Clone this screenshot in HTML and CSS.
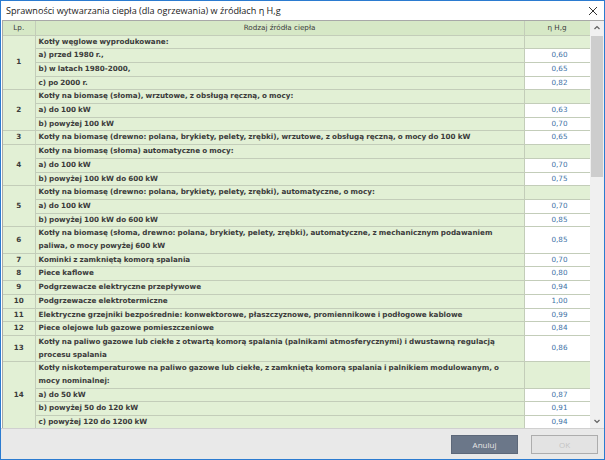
FILE: index.html
```html
<!DOCTYPE html>
<html lang="pl">
<head>
    <meta charset="UTF-8">
    <title>Sprawności wytwarzania ciepła</title>
    <link rel="stylesheet" href="styles.css">
</head>
<body>
    <div class="window">
        <div class="titlebar">
            <span class="title">Sprawności wytwarzania ciepła (dla ogrzewania) w źródłach η H,g</span>
            <svg class="close" width="10" height="10" viewBox="0 0 10 10"><path d="M1 1 L9 9 M9 1 L1 9" stroke="#333" stroke-width="1" fill="none"/></svg>
        </div>

        <div class="content">
            <div class="grid-wrap">
                <table class="grid">
                    <colgroup>
                        <col class="c-lp"><col class="c-desc"><col class="c-val">
                    </colgroup>
                    <thead>
                        <tr><th>Lp.</th><th>Rodzaj źródła ciepła</th><th>η H,g</th></tr>
                    </thead>
                    <tbody>
                        <tr><td class="lp" rowspan="4">1</td><td>Kotły węglowe wyprodukowane:</td><td class="empty"></td></tr>
                        <tr><td>a) przed 1980 r.,</td><td class="val">0,60</td></tr>
                        <tr><td>b) w latach 1980-2000,</td><td class="val">0,65</td></tr>
                        <tr><td>c) po 2000 r.</td><td class="val">0,82</td></tr>

                        <tr><td class="lp" rowspan="3">2</td><td>Kotły na biomasę (słoma), wrzutowe, z obsługą ręczną, o mocy:</td><td class="empty"></td></tr>
                        <tr><td>a) do 100 kW</td><td class="val">0,63</td></tr>
                        <tr><td>b) powyżej 100 kW</td><td class="val">0,70</td></tr>

                        <tr><td class="lp">3</td><td>Kotły na biomasę (drewno: polana, brykiety, pelety, zrębki), wrzutowe, z obsługą ręczną, o mocy do 100 kW</td><td class="val">0,65</td></tr>

                        <tr><td class="lp" rowspan="3">4</td><td>Kotły na biomasę (słoma) automatyczne o mocy:</td><td class="empty"></td></tr>
                        <tr><td>a) do 100 kW</td><td class="val">0,70</td></tr>
                        <tr><td>b) powyżej 100 kW do 600 kW</td><td class="val">0,75</td></tr>

                        <tr><td class="lp" rowspan="3">5</td><td>Kotły na biomasę (drewno: polana, brykiety, pelety, zrębki), automatyczne, o mocy:</td><td class="empty"></td></tr>
                        <tr><td>a) do 100 kW</td><td class="val">0,70</td></tr>
                        <tr><td>b) powyżej 100 kW do 600 kW</td><td class="val">0,85</td></tr>

                        <tr><td class="lp">6</td><td>Kotły na biomasę (słoma, drewno: polana, brykiety, pelety, zrębki), automatyczne, z mechanicznym podawaniem<br>paliwa, o mocy powyżej 600 kW</td><td class="val">0,85</td></tr>
                        <tr><td class="lp">7</td><td>Kominki z zamkniętą komorą spalania</td><td class="val">0,70</td></tr>
                        <tr><td class="lp">8</td><td>Piece kaflowe</td><td class="val">0,80</td></tr>
                        <tr><td class="lp">9</td><td>Podgrzewacze elektryczne przepływowe</td><td class="val">0,94</td></tr>
                        <tr><td class="lp">10</td><td>Podgrzewacze elektrotermiczne</td><td class="val">1,00</td></tr>
                        <tr><td class="lp">11</td><td>Elektryczne grzejniki bezpośrednie: konwektorowe, płaszczyznowe, promiennikowe i podłogowe kablowe</td><td class="val">0,99</td></tr>
                        <tr><td class="lp">12</td><td>Piece olejowe lub gazowe pomieszczeniowe</td><td class="val">0,84</td></tr>
                        <tr><td class="lp">13</td><td>Kotły na paliwo gazowe lub ciekłe z otwartą komorą spalania (palnikami atmosferycznymi) i dwustawną regulacją<br>procesu spalania</td><td class="val">0,86</td></tr>

                        <tr><td class="lp" rowspan="4">14</td><td>Kotły niskotemperaturowe na paliwo gazowe lub ciekłe, z zamkniętą komorą spalania i palnikiem modulowanym, o<br>mocy nominalnej:</td><td class="empty"></td></tr>
                        <tr><td>a) do 50 kW</td><td class="val">0,87</td></tr>
                        <tr><td>b) powyżej 50 do 120 kW</td><td class="val">0,91</td></tr>
                        <tr><td>c) powyżej 120 do 1200 kW</td><td class="val">0,94</td></tr>
                    </tbody>
                </table>
            </div>
            <div class="scrollbar">
                <svg class="arrow" width="14" height="14" viewBox="0 0 14 14"><path d="M4.5 8 L7 5.5 L9.5 8" stroke="#606060" stroke-width="1.2" fill="none"/></svg>
                <div class="track"><div class="thumb"></div></div>
                <svg class="arrow" width="14" height="14" viewBox="0 0 14 14"><path d="M4.5 6 L7 8.5 L9.5 6" stroke="#606060" stroke-width="1.2" fill="none"/></svg>
            </div>
        </div>

        <div class="footer">
            <button class="btn btn-cancel">Anuluj</button>
            <button class="btn btn-ok" disabled>OK</button>
        </div>
    </div>
</body>
</html>
```

FILE: styles.css
```css
html, body { margin: 0; padding: 0; background: #fff; }
.window { width: 605px; height: 460px; box-sizing: border-box; border: 1px solid #2b7bd0; display: flex; flex-direction: column; background: #fff; overflow: hidden; }

.titlebar { height: 19px; display: flex; align-items: center; justify-content: space-between; padding: 0 6px 0 5px; flex: none; }
.title { font-family: "Open Sans", "Noto Sans", sans-serif; font-size: 9.1px; color: #1a1a1a; }
.close { display: block; margin-top: 1px; }

.content { flex: 1; display: flex; min-height: 0; margin-left: 1px; border-left: 1px solid #a8a8a8; border-top: 1px solid #a8a8a8; }
.grid-wrap { flex: 1; overflow: hidden; }

.grid { border-collapse: collapse; table-layout: fixed; width: 587px; font-family: "DejaVu Sans", Verdana, sans-serif; font-size: 7.2px; word-spacing: -0.4px; color: #3b3b3b; }
.c-lp { width: 32px; }
.c-desc { width: 489px; }
.c-val { width: 66px; }
.grid th, .grid td { border: 1px solid #c3cdb9; padding: 0 3px; line-height: 12.7px; background: #e2f0d5; white-space: nowrap; overflow: hidden; }
.grid th { font-weight: normal; background: #d6e8c6; line-height: 13.5px; text-align: center; border-top: none; word-spacing: 0; }
.grid td { font-weight: bold; text-align: left; }
.grid tr > :first-child { border-left: none; }
.grid td.lp { text-align: center; }
.grid td.val { background: #fff; color: #3e72a6; font-weight: normal; text-align: center; padding-left: 8px; }

.scrollbar { width: 14px; flex: none; display: flex; flex-direction: column; background: #f0f0f0; }
.arrow { display: block; flex: none; }
.track { flex: 1; padding: 0 1px; }
.thumb { height: 141px; margin-top: 1px; background: #cdcdcd; }

.footer { height: 30px; flex: none; background: #e9e9e9; display: flex; align-items: center; justify-content: flex-end; gap: 13px; padding-right: 6px; border-top: 1px solid #d0d0d0; }
.btn { width: 67px; height: 19px; font-family: "Open Sans", "Noto Sans", sans-serif; font-size: 8px; padding: 0; }
.btn-cancel { background: #6b7789; color: #e6e6e6; border: 1px solid #5d6879; }
.btn-ok { background: #e3e3e3; color: #c4c4c4; border: 1px solid #adadad; }
```
